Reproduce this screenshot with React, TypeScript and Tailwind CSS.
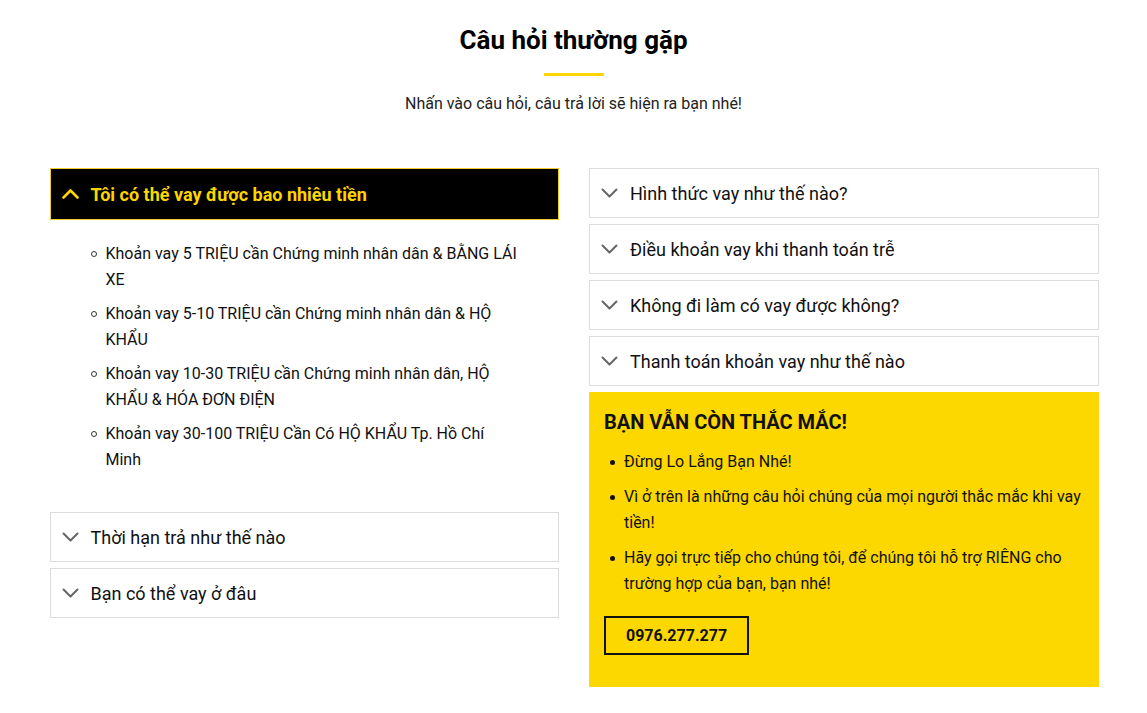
const LEFT_ITEMS = [
  'Khoản vay 5 TRIỆU cần Chứng minh nhân dân & BẰNG LÁI XE',
  'Khoản vay 5-10 TRIỆU cần Chứng minh nhân dân & HỘ KHẨU',
  'Khoản vay 10-30 TRIỆU cần Chứng minh nhân dân, HỘ KHẨU & HÓA ĐƠN ĐIỆN',
  'Khoản vay 30-100 TRIỆU Cần Có HỘ KHẨU Tp. Hồ Chí Minh',
];

const LEFT_CLOSED = ['Thời hạn trả như thế nào', 'Bạn có thể vay ở đâu'];

const RIGHT_CLOSED = [
  'Hình thức vay như thế nào?',
  'Điều khoản vay khi thanh toán trễ',
  'Không đi làm có vay được không?',
  'Thanh toán khoản vay như thế nào',
];

const HELP_ITEMS = [
  'Đừng Lo Lắng Bạn Nhé!',
  'Vì ở trên là những câu hỏi chúng của mọi người thắc mắc khi vay tiền!',
  'Hãy gọi trực tiếp cho chúng tôi, để chúng tôi hỗ trợ RIÊNG cho trường hợp của bạn, bạn nhé!',
];

function Chevron({ up, className }: { up?: boolean; className?: string }) {
  return (
    <svg width="17" height="10" viewBox="0 0 17 10" fill="none" className={className}>
      <polyline
        points={up ? '1.5,8.5 8.5,1.5 15.5,8.5' : '1.5,1.5 8.5,8.5 15.5,1.5'}
        stroke="currentColor"
        strokeWidth={up ? 2.6 : 2}
        strokeLinecap="round"
        strokeLinejoin="round"
      />
    </svg>
  );
}

function ClosedItem({ title }: { title: string }) {
  return (
    <div className="flex h-[50px] items-center gap-[12px] border border-[#dddddd] bg-white px-[11px]">
      <Chevron className="shrink-0 text-[#666666]" />
      <span className="text-[18px] text-[#111111]">{title}</span>
    </div>
  );
}

export default function App() {
  return (
    <div className="min-h-screen bg-white font-['Roboto',sans-serif] text-[#111111]">
      <div className="mx-auto flex w-[1050px] flex-col items-center pt-[24px]">
        <h2 className="text-[26px] font-bold leading-[32px] text-black">Câu hỏi thường gặp</h2>
        <div className="mt-[17px] h-[3px] w-[60px] bg-[#fdd600]" />
        <p className="mt-[17px] text-[16px] leading-[22px] text-[#222222]">
          Nhấn vào câu hỏi, câu trả lời sẽ hiện ra bạn nhé!
        </p>
      </div>

      <div className="mx-auto mt-[53px] grid w-[1050px] grid-cols-2 items-start gap-[30px] pl-[1px]">
        {/* Cột trái */}
        <div className="flex flex-col gap-[6px]">
          <div>
            <div className="flex h-[52px] items-center gap-[12px] border border-[#f2cc2a] bg-black px-[11px]">
              <Chevron up className="shrink-0 text-[#fdd600]" />
              <span className="text-[18px] font-bold text-[#fdd600]">Tôi có thể vay được bao nhiêu tiền</span>
            </div>
            <ul className="pb-[25px] pl-[41px] pr-[36px] pt-[21px]">
              {LEFT_ITEMS.map((t) => (
                <li key={t} className="mb-[8px] flex text-[16px] leading-[26px] text-[#111111]">
                  <span className="mr-[9px] mt-[10px] h-[6px] w-[6px] shrink-0 rounded-full border border-[#333333]" />
                  <span>{t}</span>
                </li>
              ))}
            </ul>
          </div>
          {LEFT_CLOSED.map((t) => (
            <ClosedItem key={t} title={t} />
          ))}
        </div>

        {/* Cột phải */}
        <div className="flex flex-col gap-[6px]">
          {RIGHT_CLOSED.map((t) => (
            <ClosedItem key={t} title={t} />
          ))}
          <div className="bg-[#fdd700] px-[15px] pb-[32px] pt-[17px]">
            <h3 className="text-[20px] font-bold leading-[26px] text-[#111111]">BẠN VẪN CÒN THẮC MẮC!</h3>
            <ul className="mt-[14px] pl-[6px]">
              {HELP_ITEMS.map((t) => (
                <li key={t} className="mb-[9px] flex text-[16px] leading-[26px] text-[#111111]">
                  <span className="mr-[9px] mt-[11px] h-[5px] w-[5px] shrink-0 rounded-full bg-[#111111]" />
                  <span>{t}</span>
                </li>
              ))}
            </ul>
            <div className="mt-[10px] inline-flex h-[39px] items-center border-2 border-[#111111] px-[20px] text-[16px] font-bold text-[#111111]">
              0976.277.277
            </div>
          </div>
        </div>
      </div>
    </div>
  );
}
